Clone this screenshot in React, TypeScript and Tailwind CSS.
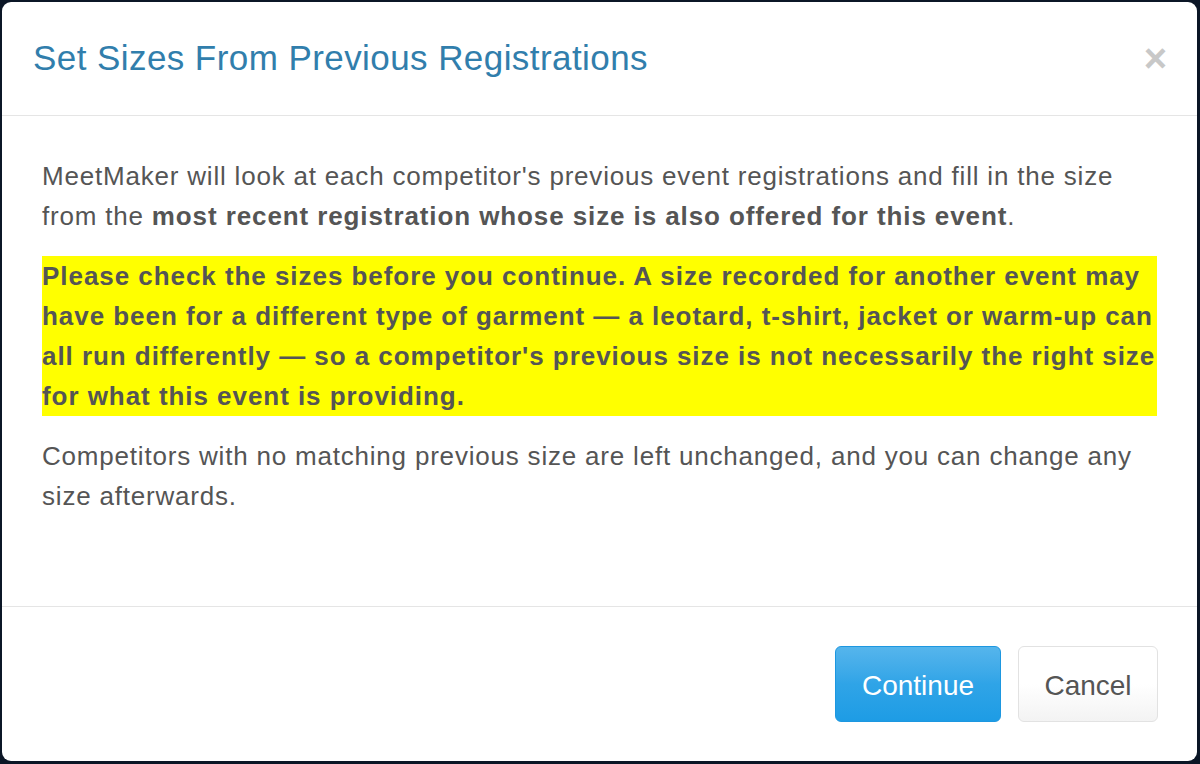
import React from 'react';

// Modal chrome — widths and paddings are tuned for the large-zoom layout.
const TEXT = 'text-[26px] leading-[40px] text-[#555555]';
const BODY_P = `${TEXT} tracking-[0.8px] whitespace-nowrap`;
const WARNING_P = `${TEXT} tracking-[0.95px] font-bold bg-[#ffff00] whitespace-nowrap`;

function CloseButton() {
  return (
    <button
      type="button"
      aria-label="Close"
      className="text-[40px] leading-none font-bold text-[#c8c8c8] hover:text-[#999] -mt-[2px]"
    >
      ×
    </button>
  );
}

export default function App() {
  return (
    <div
      className="w-[1200px] h-[764px] bg-[#0b1626] pt-[2px] pl-[2px] pr-[3px] pb-[3px]"
      style={{ fontFamily: '"Liberation Sans", Arial, Helvetica, sans-serif' }}
    >
      <div className="h-full bg-white rounded-[9px] flex flex-col overflow-hidden">
        <div className="h-[114px] shrink-0 flex items-center justify-between pl-[31px] pr-[30px] border-b border-[#e5e5e5]">
          <h4 className="text-[35px] leading-[40px] tracking-[0.43px] text-[#317eac] -mt-[2px]">
            Set Sizes From Previous Registrations
          </h4>
          <CloseButton />
        </div>

        <div className="px-[40px] pt-[40px] h-[491px] shrink-0 border-b border-[#e5e5e5]">
          <p className={`${BODY_P} mb-[20px]`}>
            MeetMaker will look at each competitor's previous event registrations and fill in the size
            <br />
            from the <b className="font-bold tracking-[0.9px]">most recent registration whose size is also offered for this event</b>.
          </p>
          <p className={`${WARNING_P} mb-[20px]`}>
            Please check the sizes before you continue. A size recorded for another event may
            <br />
            have been for a different type of garment — a leotard, t-shirt, jacket or warm-up can
            <br />
            all run differently — so a competitor's previous size is not necessarily the right size
            <br />
            for what this event is providing.
          </p>
          <p className={BODY_P}>
            Competitors with no matching previous size are left unchanged, and you can change any
            <br />
            size afterwards.
          </p>
        </div>

        <div className="flex-1 flex items-start justify-end gap-[17px] pt-[39px] pr-[39px]">
          <button
            type="button"
            className="h-[76px] w-[166px] rounded-[6px] border border-[#1d97e0] bg-gradient-to-b from-[#55b5ec] via-[#2fa4e7] to-[#1d9ce5] text-white text-[28px] pt-[3px]"
          >
            Continue
          </button>
          <button
            type="button"
            className="h-[76px] w-[140px] rounded-[6px] border border-[#e2e2e2] bg-gradient-to-b from-white via-white to-[#f3f3f3] text-[#555555] text-[28px] pt-[3px]"
          >
            Cancel
          </button>
        </div>
      </div>
    </div>
  );
}
